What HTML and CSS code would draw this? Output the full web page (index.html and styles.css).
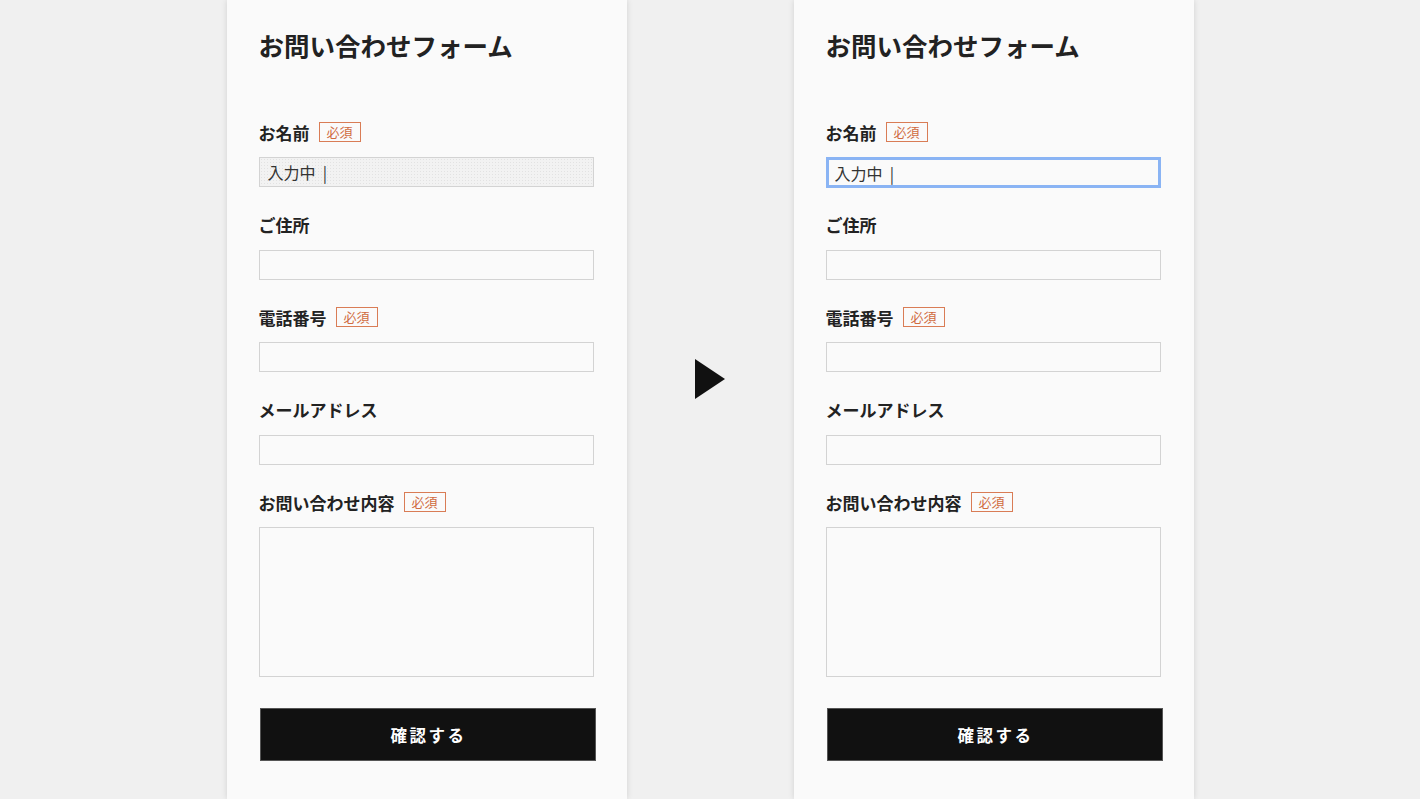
FILE: index.html
```html
<!DOCTYPE html>
<html lang="ja">
<head>
    <meta charset="UTF-8">
    <meta name="viewport" content="width=device-width, initial-scale=1.0">
    <title>お問い合わせフォーム</title>
    <link rel="stylesheet" href="styles.css">
</head>
<body>
    <div class="stage">
        <!-- before: typing state -->
        <div class="panel">
            <h1>お問い合わせフォーム</h1>
            <form class="form">
                <div class="field">
                    <label class="label">お名前<span class="badge">必須</span></label>
                    <input class="input-field typing" type="text" value="入力中&nbsp;&nbsp;|">
                </div>
                <div class="field">
                    <label class="label">ご住所</label>
                    <input class="input-field" type="text">
                </div>
                <div class="field">
                    <label class="label">電話番号<span class="badge">必須</span></label>
                    <input class="input-field" type="tel">
                </div>
                <div class="field">
                    <label class="label">メールアドレス</label>
                    <input class="input-field" type="email">
                </div>
                <div class="field">
                    <label class="label">お問い合わせ内容<span class="badge">必須</span></label>
                    <textarea class="input-field textarea"></textarea>
                </div>
                <button type="button" class="button">確認する</button>
            </form>
        </div>

        <div class="arrow">
            <svg width="30" height="40" viewBox="0 0 30 40"><polygon points="0,0 30,20 0,40" fill="#111"/></svg>
        </div>

        <!-- after: focus state -->
        <div class="panel">
            <h1>お問い合わせフォーム</h1>
            <form class="form">
                <div class="field">
                    <label class="label">お名前<span class="badge">必須</span></label>
                    <input class="input-field focused" type="text" value="入力中&nbsp;&nbsp;|">
                </div>
                <div class="field">
                    <label class="label">ご住所</label>
                    <input class="input-field" type="text">
                </div>
                <div class="field">
                    <label class="label">電話番号<span class="badge">必須</span></label>
                    <input class="input-field" type="tel">
                </div>
                <div class="field">
                    <label class="label">メールアドレス</label>
                    <input class="input-field" type="email">
                </div>
                <div class="field">
                    <label class="label">お問い合わせ内容<span class="badge">必須</span></label>
                    <textarea class="input-field textarea"></textarea>
                </div>
                <button type="button" class="button">確認する</button>
            </form>
        </div>
    </div>
</body>
</html>
```

FILE: styles.css
```css
body {
    font-family: "Noto Sans CJK JP", "Noto Sans", sans-serif;
    background-color: #f0f0f0;
    color: #222;
    margin: 0;
    height: 799px;
    overflow: hidden;
}
.stage {
    display: flex;
    justify-content: center;
    height: 100%;
}
.panel {
    width: 400px;
    box-sizing: border-box;
    padding: 26px 33px 0 32px;
    background: #fafafa;
    box-shadow: 0 0 6px rgba(0, 0, 0, 0.13);
}
h1 {
    margin: 0 0 57px;
    font-size: 25.5px;
    line-height: 37px;
    font-weight: bold;
    color: #222;
}
.form {
    display: flex;
    flex-direction: column;
}
.field {
    display: flex;
    flex-direction: column;
    margin-bottom: 25.5px;
}
.label {
    display: flex;
    align-items: center;
    height: 24px;
    margin-bottom: 13px;
    font-size: 17px;
    font-weight: bold;
}
.badge {
    margin-left: 9px;
    height: 20px;
    box-sizing: border-box;
    padding: 0 7px;
    border: 1px solid #d97c55;
    color: #d06a40;
    font-size: 13px;
    font-weight: normal;
    line-height: 18px;
}
.input-field {
    width: 335px;
    height: 30px;
    box-sizing: border-box;
    margin: 0;
    padding: 0 8px;
    font-family: inherit;
    font-size: 16px;
    color: #333;
    background: #fafafa;
    border: 1px solid #d3d3d3;
    border-radius: 0;
    outline: none;
}
.typing {
    background-color: #f2f2f2;
    background-image: radial-gradient(circle, #e2e2e2 0.6px, transparent 0.8px);
    background-size: 3px 3px;
}
.focused {
    height: 31px;
    margin-bottom: -1px;
    padding: 0 6px;
    border: 3px solid #8ab4f4;
}
.textarea {
    height: 150px;
    resize: none;
}
.field:last-of-type {
    margin-bottom: 31px;
}
.button {
    width: 336px;
    height: 53px;
    margin-left: 1px;
    padding-left: 8px;
    background: #111;
    color: white;
    border: 1px solid #555;
    font-family: inherit;
    font-size: 16.5px;
    font-weight: bold;
    letter-spacing: 2.5px;
    cursor: pointer;
}
.arrow {
    width: 167px;
    display: flex;
    justify-content: center;
    align-items: flex-start;
    padding-top: 359px;
    box-sizing: border-box;
}
```
